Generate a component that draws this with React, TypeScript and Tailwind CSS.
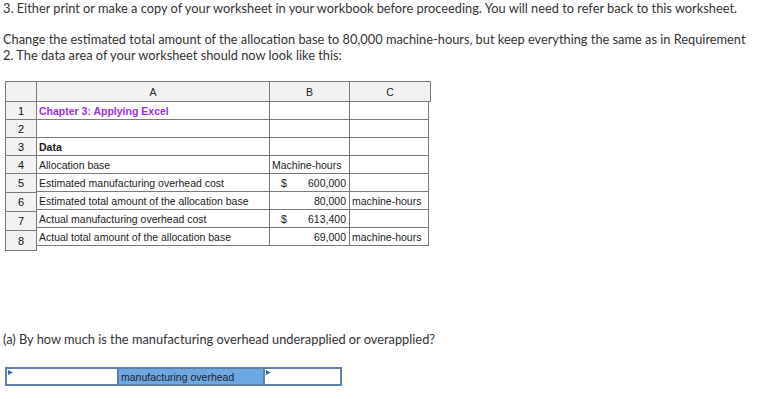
const rows: { a: string; b?: React.ReactNode; c?: string; kind?: "title" | "bold" }[] = [
  { a: "Chapter 3: Applying Excel", kind: "title" },
  { a: "" },
  { a: "Data", kind: "bold" },
  { a: "Allocation base", b: <span className="pl-[2px]">Machine-hours</span> },
  { a: "Estimated manufacturing overhead cost", b: <Money sign amount="600,000" /> },
  { a: "Estimated total amount of the allocation base", b: <Money amount="80,000" />, c: "machine-hours" },
  { a: "Actual manufacturing overhead cost", b: <Money sign amount="613,400" /> },
  { a: "Actual total amount of the allocation base", b: <Money amount="69,000" />, c: "machine-hours" },
];

// row header heights drift a little from the data rows, like the sheet export
const numHeights = ["h-[18px]", "h-[18px]", "h-[18px]", "h-[18px]", "h-[19px]", "h-[19px]", "h-[19px]", "h-[20px]"];

function Money({ sign, amount }: { sign?: boolean; amount: string }) {
  return (
    <div className="flex w-full justify-between pl-[11px] pr-[3px]">
      <span>{sign ? "$" : ""}</span>
      <span>{amount}</span>
    </div>
  );
}

function Sheet() {
  const cell = "border-r border-b border-[#7a7a7a] flex items-center";
  return (
    <div className="ml-[5px] flex font-['Liberation_Sans',Arial,sans-serif] text-[10.5px] text-[#222]">
      <div className="w-[32px] border-l border-t border-[#7a7a7a]">
        <div className={`${cell} h-[20px] bg-[#f2f2f2]`} />
        {numHeights.map((h, i) => (
          <div key={i} className={`${cell} ${h} justify-center bg-[#f2f2f2] text-[11px] text-[#111]`}>
            {i + 1}
          </div>
        ))}
      </div>
      <div className="border-t border-[#7a7a7a]">
        <div className="flex h-[20px] bg-[#f2f2f2]">
          <div className={`${cell} w-[233px] justify-center`}>A</div>
          <div className={`${cell} w-[80px] justify-center`}>B</div>
          <div className={`${cell} w-[81px] justify-center`}>C</div>
        </div>
        {rows.map((r, i) => (
          <div key={i} className="flex h-[18px]">
            <div
              className={`${cell} w-[233px] pl-[2px] ${
                r.kind === "title"
                  ? "text-[10.5px] font-bold text-[#9b30dc]"
                  : r.kind === "bold"
                  ? "font-bold"
                  : ""
              }`}
            >
              {r.a}
            </div>
            <div className={`${cell} w-[80px]`}>{r.b}</div>
            <div className={`${cell} w-[79px] pl-[2px]`}>{r.c}</div>
          </div>
        ))}
      </div>
    </div>
  );
}

function Marker() {
  return (
    <svg className="absolute left-[1px] top-[1px]" width="5" height="5" viewBox="0 0 5 5">
      <path d="M0 0 L5 2.5 L0 5 Z" fill="#2f6db5" />
    </svg>
  );
}

export default function App() {
  return (
    <div className="h-[399px] w-[759px] bg-white font-['Lato','Open_Sans',sans-serif] text-[12.8px] leading-[16px] text-[#333]">
      <p className="pl-[3px]">
        3. Either print or make a copy of your worksheet in your workbook before proceeding. You will need to refer back to this worksheet.
      </p>
      <p className="mt-[15px] pl-[3px] pr-[8px]">
        Change the estimated total amount of the allocation base to 80,000 machine-hours, but keep everything the same as in Requirement 2. The data area of your worksheet should now look like this:
      </p>
      <div className="mt-[18px]">
        <Sheet />
      </div>
      <p className="mt-[80px] pl-[3px]">(a) By how much is the manufacturing overhead underapplied or overapplied?</p>
      <div className="ml-[5px] mt-[20px] flex h-[19px]">
        <div className="relative w-[114px] border-2 border-[#5c80a8] bg-white">
          <Marker />
        </div>
        <div className="flex w-[144px] items-center border-y-2 border-[#5c80a8] bg-[#6ea8e4] pl-[2px] font-['Liberation_Sans',Arial,sans-serif] text-[10.5px] text-[#222]">
          manufacturing overhead
        </div>
        <div className="relative w-[79px] border-2 border-[#5c80a8] bg-white">
          <Marker />
        </div>
      </div>
    </div>
  );
}
